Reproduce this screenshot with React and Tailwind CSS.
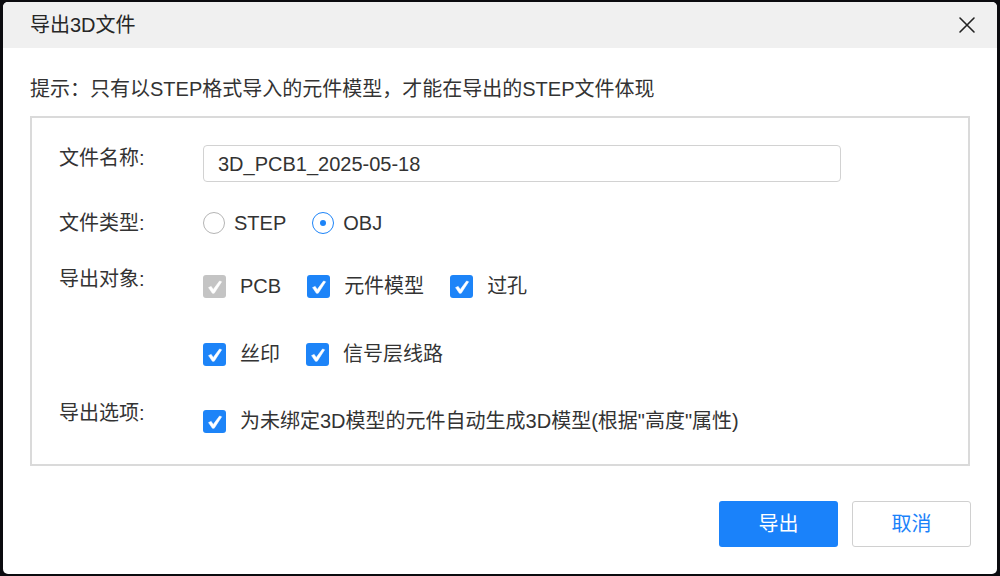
import React from "react";

const FONT = { fontFamily: '"Liberation Sans", "Noto Sans CJK SC", sans-serif' };

function Check({ gray = false }) {
  return (
    <span
      className={`w-[23px] h-[23px] rounded-[3px] flex items-center justify-center shrink-0 ${
        gray ? "bg-[#c4c4c4]" : "bg-[#1d84f8]"
      }`}
    >
      <svg width="17" height="17" viewBox="0 0 17 17">
        <path
          d="M2.6 9.6 L5.2 8.4 L7.2 11.6 L13.6 3 L15.6 3.8 L8.2 15.2 L6.4 15.2 Z"
          fill="white"
          stroke="white"
          strokeWidth="0.6"
          strokeLinejoin="round"
        />
      </svg>
    </span>
  );
}

function CheckItem({ label, gray }) {
  return (
    <div className="flex items-center gap-[14px] h-[24px]">
      <Check gray={gray} />
      <span className="leading-[24px]">{label}</span>
    </div>
  );
}

function Radio({ checked, label }) {
  return (
    <div className="flex items-center gap-[9px] h-[24px]">
      <span
        className={`w-[22px] h-[22px] rounded-full border-[1.5px] flex items-center justify-center ${
          checked ? "border-[#1d84f8]" : "border-[#b5b5b5]"
        }`}
      >
        {checked && <span className="w-[6px] h-[6px] rounded-full bg-[#1d84f8]" />}
      </span>
      <span className="leading-[24px]">{label}</span>
    </div>
  );
}

export default function App() {
  return (
    <div
      className="w-[1000px] h-[576px] bg-[#0b0b0f] pt-[2px] pl-[3px] pr-[3px] overflow-hidden"
      style={FONT}
    >
      <div className="w-[994px] h-[572px] bg-white rounded-[5px] overflow-hidden flex flex-col text-[20px] text-[#333333]">
        {/* header */}
        <div className="h-[46px] bg-[#f0f0f0] flex items-center justify-between pl-[27px] pr-[21px] shrink-0">
          <span className="leading-[24px] text-[#262626]">导出3D文件</span>
          <svg width="18" height="18" viewBox="0 0 18 18">
            <path d="M2 2 L16 16 M16 2 L2 16" stroke="#222" strokeWidth="1.6" strokeLinecap="round" />
          </svg>
        </div>

        <div className="pl-[27px] pr-[24px] flex flex-col">
          <div className="mt-[29px] leading-[24px] h-[24px]">
            提示：只有以STEP格式导入的元件模型，才能在导出的STEP文件体现
          </div>

          {/* box */}
          <div className="mt-[15px] w-[940px] h-[350px] border-2 border-[#dadada] pt-[27px] pl-[27px] flex flex-col">
            {/* row 1 */}
            <div className="flex">
              <div className="w-[144px] mt-[1px] leading-[24px] h-[24px]">文件名称:</div>
              <div className="w-[638px] h-[37px] border border-[#d2d2d2] rounded-[4px] flex items-center pl-[14px] leading-[24px]">
                3D_PCB1_2025-05-18
              </div>
            </div>

            {/* row 2 */}
            <div className="flex mt-[29px]">
              <div className="w-[144px] leading-[24px] h-[24px]">文件类型:</div>
              <div className="flex gap-[26px]">
                <Radio label="STEP" />
                <Radio checked label="OBJ" />
              </div>
            </div>

            {/* row 3 */}
            <div className="flex mt-[32px]">
              <div className="w-[144px] leading-[24px] h-[24px]">导出对象:</div>
              <div className="flex flex-col gap-[44px] mt-[7px]">
                <div className="flex gap-[26px]">
                  <CheckItem gray label="PCB" />
                  <CheckItem label="元件模型" />
                  <CheckItem label="过孔" />
                </div>
                <div className="flex gap-[26px]">
                  <CheckItem label="丝印" />
                  <CheckItem label="信号层线路" />
                </div>
              </div>
            </div>

            {/* row 5 */}
            <div className="flex mt-[35px]">
              <div className="w-[144px] leading-[24px] h-[24px]">导出选项:</div>
              <div className="mt-[8px]">
                <CheckItem label={'为未绑定3D模型的元件自动生成3D模型(根据"高度"属性)'} />
              </div>
            </div>
          </div>

          {/* buttons */}
          <div className="mt-[35px] w-[941px] flex justify-end gap-[14px]">
            <button className="w-[119px] h-[46px] rounded-[3px] bg-[#1a82fa] text-white text-[20px]">
              导出
            </button>
            <button className="w-[119px] h-[46px] rounded-[3px] bg-white border border-[#d0d0d0] text-[#1a82fa] text-[20px]">
              取消
            </button>
          </div>
        </div>
      </div>
    </div>
  );
}
